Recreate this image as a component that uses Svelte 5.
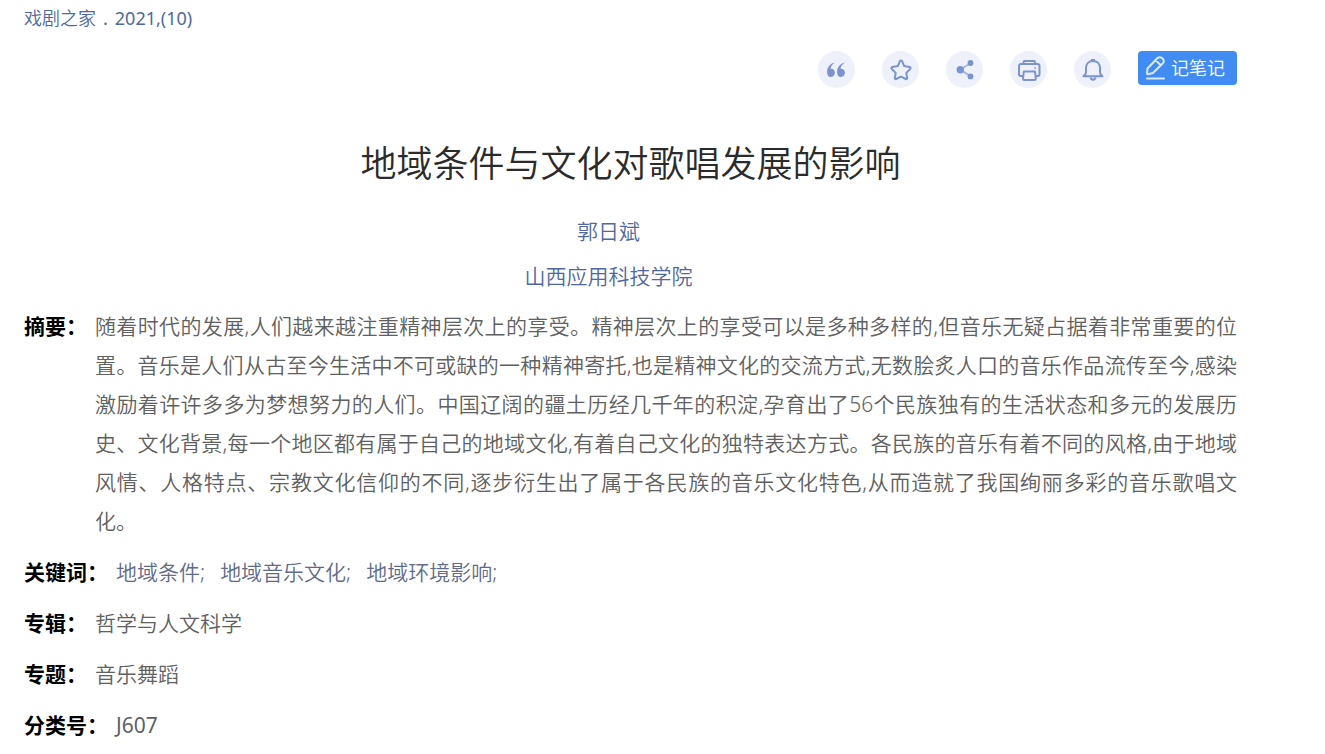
<script lang="ts">
  const keywords = ["地域条件", "地域音乐文化", "地域环境影响"];

  const details = [
    { label: "专辑：", value: "哲学与人文科学" },
    { label: "专题：", value: "音乐舞蹈" },
    { label: "分类号：", value: "J607", latin: true }
  ];
</script>

<main class="article">
  <nav class="source">
    <a href="#journal">戏剧之家</a>
    <span class="latin">.</span>
    <a class="latin" href="#issue">2021,(10)</a>
  </nav>

  <div class="toolbar">
    <button class="tool" aria-label="引用">
      <svg viewBox="0 0 37 37" fill="#7b93cf">
        <path d="M17.300 11.500c-3 1.500-4.600 3.600-4.700 6.300 2.400-.3 4.300 1.200 4.300 3.800 0 2.600-1.700 4.300-3.900 4.300-2.600 0-3.900-2-3.900-5 0-4.900 3.200-8.600 8.200-9.400z" />
        <path d="M27.300 11.500c-3 1.500-4.600 3.600-4.700 6.300 2.400-.3 4.300 1.200 4.300 3.800 0 2.600-1.700 4.300-3.900 4.300-2.600 0-3.900-2-3.900-5 0-4.900 3.200-8.600 8.200-9.400z" />
      </svg>
    </button>
    <button class="tool" aria-label="收藏">
      <svg viewBox="0 0 37 37" fill="none" stroke="#7b93cf" stroke-width="2" stroke-linejoin="round">
        <path d="M17.800 10.400q1.200-1.600 2.400 0l2 4.700 5.300.9q1.800.6.700 2l-3.900 3.900.9 5.200q0 1.400-1.400.9L19 25.600l-4.800 2.400q-1.400.5-1.400-.9l.9-5.200L9.800 18q-1.100-1.400.7-2l5.300-.9z" />
      </svg>
    </button>
    <button class="tool" aria-label="分享">
      <svg viewBox="0 0 37 37" fill="#7b93cf">
        <path d="M25 12L14 18.700l11 6.700" fill="none" stroke="#a9b9e1" stroke-width="2" />
        <circle cx="14.300" cy="18.700" r="3.700" />
        <circle cx="24.500" cy="12" r="2.900" />
        <circle cx="24.500" cy="25.400" r="2.900" />
      </svg>
    </button>
    <button class="tool" aria-label="打印">
      <svg viewBox="0 0 37 37" fill="none" stroke="#7b93cf" stroke-width="2" stroke-linejoin="round">
        <path d="M13 13l1-3h10.500l1 3M13 25h-2.500q-1.500 0-1.500-2v-8q0-2 2-2h16.500q2 0 2 2v8q0 2-1.500 2H25.500" />
        <path d="M13.800 20.500h11.200l.8 7q0 1.500-1.200 1.500H14.200q-1.200 0-1.200-1.500z" />
        <path d="M24 17h2" stroke="#a9b9e1" />
      </svg>
    </button>
    <button class="tool" aria-label="提醒">
      <svg viewBox="0 0 37 37" fill="none" stroke="#7b93cf" stroke-width="2" stroke-linejoin="round">
        <path d="M9.500 25.200q2.500-1.600 2.500-4v-4.200c0-4.400 2.900-7 7-7s7 2.600 7 7v4.200q0 2.400 2.500 4z" />
        <path d="M17 9h4M16.500 26.500q.5 2.200 2.500 2.200t2.500-2.200" />
      </svg>
    </button>
    <button class="note">
      <svg viewBox="0 0 22 24" fill="none" stroke="#d9e8fd" stroke-width="2" stroke-linejoin="round">
        <path d="M2.500 12.500L12.500 2q2.300-1.800 4.800.3t.8 4.700L8 17l-5 1.200q-1 0-1-1zM11 4.500l4.500 4.500" />
        <path d="M2 22.500h17" stroke-linecap="round" />
      </svg>
      记笔记
    </button>
  </div>

  <h1>地域条件与文化对歌唱发展的影响</h1>

  <div class="byline">
    <a href="#author">郭日斌</a>
    <a href="#organization">山西应用科技学院</a>
  </div>

  <dl>
    <div class="row">
      <dt>摘要：</dt>
      <dd class="abstract">随着时代的发展,人们越来越注重精神层次上的享受。精神层次上的享受可以是多种多样的,但音乐无疑占据着非常重要的位置。音乐是人们从古至今生活中不可或缺的一种精神寄托,也是精神文化的交流方式,无数脍炙人口的音乐作品流传至今,感染激励着许许多多为梦想努力的人们。中国辽阔的疆土历经几千年的积淀,孕育出了56个民族独有的生活状态和多元的发展历史、文化背景,每一个地区都有属于自己的地域文化,有着自己文化的独特表达方式。各民族的音乐有着不同的风格,由于地域风情、人格特点、宗教文化信仰的不同,逐步衍生出了属于各民族的音乐文化特色,从而造就了我国绚丽多彩的音乐歌唱文化。</dd>
    </div>
    <div class="row">
      <dt>关键词：</dt>
      <dd class="keywords">
        {#each keywords as word}
          <a href="#keyword">{word};</a>
        {/each}
      </dd>
    </div>
    {#each details as item}
      <div class="row">
        <dt>{item.label}</dt>
        <dd class:latin={item.latin}>{item.value}</dd>
      </div>
    {/each}
  </dl>
</main>

<style>
  :global(body) {
    margin: 0;
    background: #fff;
  }

  .article {
    padding: 0 88px 8px 24px;
    font-family: "Noto Sans", "Noto Sans CJK SC", sans-serif;
    font-size: 21px;
    font-weight: 350;
    line-height: 39px;
    color: #606060;
  }

  a {
    color: #4f689f;
    text-decoration: none;
  }

  .latin {
    font-weight: 400;
  }

  .source {
    display: flex;
    gap: 7px;
    font-size: 18px;
    line-height: 36px;
    color: #4f689f;
  }

  .toolbar {
    display: flex;
    justify-content: flex-end;
    align-items: flex-start;
    gap: 27px;
    margin-top: 15px;
  }

  button {
    border: 0;
    font-family: inherit;
    cursor: pointer;
  }

  .tool {
    width: 37px;
    height: 37px;
    padding: 0;
    border-radius: 50%;
    background: #eef1fa;
  }

  .tool svg {
    display: block;
    width: 37px;
    height: 37px;
  }

  .note {
    display: flex;
    align-items: center;
    gap: 4px;
    height: 34px;
    padding: 0 12px 0 7px;
    border-radius: 4px;
    background: #408cf2;
    color: #fff;
    font-size: 18px;
    font-weight: 350;
    line-height: 32px;
  }

  .note svg {
    width: 22px;
    height: 24px;
  }

  h1 {
    margin: 49px 0 21px;
    font-size: 36px;
    font-weight: 350;
    line-height: 54px;
    text-align: center;
    color: #2b2b2b;
  }

  .byline {
    display: flex;
    flex-direction: column;
    align-items: center;
    gap: 6px;
    padding-right: 44px;
  }

  dl {
    display: flex;
    flex-direction: column;
    gap: 12px;
    margin: 11px 0 0;
  }

  .row {
    display: flex;
    gap: 8px;
  }

  dt {
    flex: none;
    font-weight: 700;
    color: #000;
  }

  dd {
    margin: 0;
  }

  .abstract {
    text-align: justify;
  }

  .keywords {
    display: flex;
    flex-wrap: wrap;
    gap: 0 15px;
  }

  .keywords a {
    color: #5f6b88;
  }
</style>
